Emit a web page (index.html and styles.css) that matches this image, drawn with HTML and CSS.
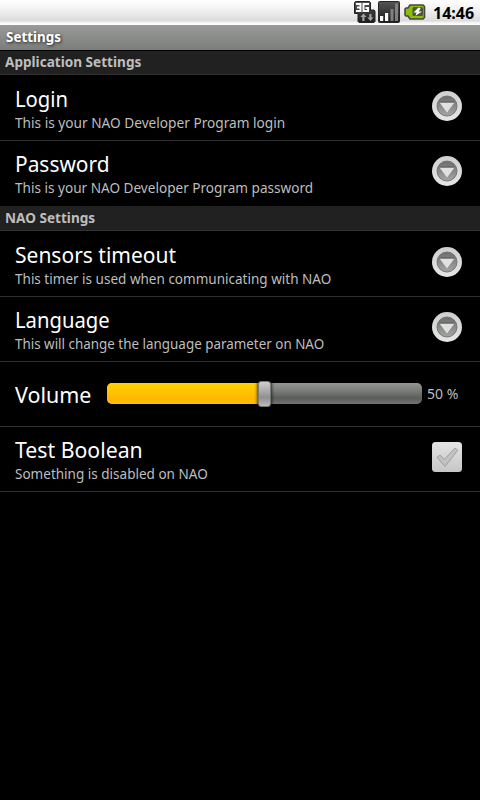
FILE: index.html
```html
<!DOCTYPE html>
<html lang="en">
<head>
<meta charset="utf-8">
<title>Settings</title>
<link rel="stylesheet" href="styles.css">
</head>
<body>
<svg class="defs" width="0" height="0" aria-hidden="true">
  <defs>
    <linearGradient id="ring" x1="0" y1="0" x2="0" y2="1"><stop offset="0" stop-color="#cfcfcf"/><stop offset="1" stop-color="#e6e6e6"/></linearGradient>
    <linearGradient id="disc" x1="0" y1="0" x2="0" y2="1"><stop offset="0" stop-color="#6c6e6c"/><stop offset="1" stop-color="#a4a6a4"/></linearGradient>
    <linearGradient id="dark" x1="0" y1="0" x2="0" y2="1"><stop offset="0" stop-color="#555"/><stop offset="1" stop-color="#1c1c1c"/></linearGradient>
    <symbol id="more" viewBox="0 0 30 30">
      <circle cx="15" cy="15" r="15" fill="url(#ring)"/>
      <circle cx="15" cy="15" r="10" fill="url(#disc)" stroke="#6c6e6c" stroke-width=".9"/>
      <path d="M7.500 11.500h15L15 21.500z" fill="#dfe0df"/>
      <path d="M7.500 11h15" stroke="#505250" stroke-width=".9"/>
    </symbol>
  </defs>
</svg>
<header class="status">
  <svg class="net" width="22" height="22" viewBox="0 0 22 22">
    <path d="M.5 1.500l1-1h14l1 1V9H20l1 1v10.500l-1 1H5l-1-1V12.500H.5z" fill="url(#dark)" stroke="#222"/>
    <path d="M2 3h4.500v7H2M3 6.500h3.500M15 3H9.500v7H14V7h-2.500" fill="none" stroke="#fff" stroke-width="2"/>
    <path d="M9.500 12.500l3 3.500h-2v4H8.300v-4H6.300zM16.500 20l-3.200-3.500h2V13h2.200v3.500h2z" fill="#a2a2a2"/>
  </svg>
  <svg class="signal" width="22" height="22" viewBox="0 0 22 22">
    <rect x=".5" y=".5" width="21" height="21" rx="1" fill="url(#dark)" stroke="#252525"/>
    <path d="M2 15h3.200v5H2zM7 12h3.200v8H7z" fill="#fff"/>
    <path d="M12.500 8h3v12h-3zM17 2.500h3V20h-3z" fill="#808080"/>
  </svg>
  <svg class="battery" width="22" height="16" viewBox="0 0 22 16">
    <path d="M6 1h13l1.500 1.500v11L19 15H6l-2-3H2L1 11V5l1-1h2z" fill="#8bbf05" stroke="#454545" stroke-width="1.600"/>
    <rect x="8.500" y="3" width="10.500" height="9" rx="1.500" fill="#50543e"/>
    <path d="M14.500 3.500L9.500 8.500h3l-1 3.200L18 7.500h-3.300l2-3.500z" fill="#fff"/>
  </svg>
  <span class="clock">14:46</span>
</header>
<h1 class="titlebar"><span class="fit w96">Settings</span></h1>
<main>
  <h2 class="category"><span class="fit w97">Application Settings</span></h2>
  <section class="row first">
    <div class="text"><div class="name"><span class="fit w92">Login</span></div><div class="summary"><span class="fit w975">This is your NAO Developer Program login</span></div></div>
    <svg class="widget" width="30" height="30"><use href="#more"/></svg>
  </section>
  <section class="row last">
    <div class="text"><div class="name"><span class="fit w95">Password</span></div><div class="summary"><span class="fit w97">This is your NAO Developer Program password</span></div></div>
    <svg class="widget" width="30" height="30"><use href="#more"/></svg>
  </section>
  <h2 class="category"><span class="fit w97">NAO Settings</span></h2>
  <section class="row first">
    <div class="text"><div class="name"><span class="fit w955">Sensors timeout</span></div><div class="summary"><span class="fit w965">This timer is used when communicating with NAO</span></div></div>
    <svg class="widget" width="30" height="30"><use href="#more"/></svg>
  </section>
  <section class="row">
    <div class="text"><div class="name"><span class="fit w92">Language</span></div><div class="summary"><span class="fit w96">This will change the language parameter on NAO</span></div></div>
    <svg class="widget" width="30" height="30"><use href="#more"/></svg>
  </section>
  <section class="row volume">
    <div class="name"><span class="fit w975">Volume</span></div>
    <div class="track"><div class="fill"></div><div class="thumb"></div></div>
    <div class="summary percent">50 %</div>
  </section>
  <section class="row">
    <div class="text"><div class="name"><span class="fit w965">Test Boolean</span></div><div class="summary"><span class="fit w965">Something is disabled on NAO</span></div></div>
    <svg class="widget" width="30" height="30" viewBox="0 0 30 30">
      <rect width="30" height="30" rx="3.500" fill="url(#check)"/>
      <defs><linearGradient id="check" x1="0" y1="0" x2="0" y2="1"><stop offset="0" stop-color="#e4e4e4"/><stop offset="1" stop-color="#c6c6c6"/></linearGradient></defs>
      <path d="M5 15.500l3-2.500 4.200 4.500L23 6l2.800 2.200L13 24.500z" fill="#c2c2c2" stroke="#999" stroke-width=".9" stroke-linejoin="round"/>
    </svg>
  </section>
</main>
</body>
</html>
```
FILE: styles.css
```css
* { box-sizing: border-box; }
body {
  margin: 0;
  min-height: 800px;
  background: #000;
  color: #fff;
  font-family: "Noto Sans", "Open Sans", sans-serif;
}
.defs { display: block; }
.fit { display: inline-block; transform-origin: 0 50%; }
.w92 { transform: scaleX(.92); }
.w95 { transform: scaleX(.95); }
.w955 { transform: scaleX(.955); }
.w96 { transform: scaleX(.958); }
.w965 { transform: scaleX(.966); }
.w97 { transform: scaleX(.97); }
.w975 { transform: scaleX(.976); }
.status {
  height: 25px;
  display: flex;
  align-items: flex-start;
  justify-content: flex-end;
  padding: 1px 6px 0 0;
  background: linear-gradient(#fff, #f3f3f3 35%, #dcdcdc 82%, #f7f7f7 92%, #fff);
}
.signal { margin: 0 4px 0 2px; }
.battery { margin-top: 3px; }
.clock {
  width: 41px;
  margin-left: 7px;
  color: #000;
  font-size: 16px;
  font-weight: 700;
  line-height: 24px;
  white-space: nowrap;
}
.titlebar {
  height: 26px;
  margin: 0;
  padding-left: 6px;
  border-bottom: 1px solid #000;
  background: linear-gradient(#999b99, #7b7d7b);
  font-size: 14px;
  line-height: 24px;
  text-shadow: 1px 1px 3px #222;
}
.category {
  height: 24px;
  margin: 0;
  padding-left: 5px;
  border-bottom: 1px solid #333;
  background: #212121;
  color: #bdbebd;
  font-size: 14px;
  line-height: 22px;
}
.row {
  height: 65px;
  display: flex;
  align-items: flex-start;
  padding: 0 18px 0 15px;
  border-bottom: 1px solid #303030;
}
.row.first { height: 66px; }
.row.last { border-bottom: 0; }
.row.last + .category { height: 25px; line-height: 24px; }
.text { flex: 1; padding-top: 7px; }
.first .text { padding-top: 8px; }
.name { font-size: 22px; line-height: 31px; white-space: nowrap; }
.summary { color: #bdbebd; font-size: 14px; line-height: 18px; white-space: nowrap; }
.widget { margin-top: 15px; }
.first .widget { margin-top: 16px; }
.volume .name { width: 92px; padding-top: 17px; }
.track {
  position: relative;
  width: 315px;
  height: 21px;
  margin-top: 21px;
  border-radius: 5px;
  background: linear-gradient(#949694, #7c7e7c 35%, #5a5d5a 72%, #707370);
}
.fill {
  width: 50%;
  height: 21px;
  border-radius: 5px 0 0 5px;
  background: linear-gradient(#ffd300, #ffb600 75%, #ffc300);
}
.thumb {
  position: absolute;
  left: 151px;
  top: -2px;
  width: 13px;
  height: 26px;
  border: 1px solid #777;
  border-radius: 3px;
  background: linear-gradient(#cfcfcf, #909090 65%, #bcbcbc);
  box-shadow: 0 0 3px 1px rgba(0, 0, 0, .65);
}
.percent { margin: 23px 0 0 5px; }
```
